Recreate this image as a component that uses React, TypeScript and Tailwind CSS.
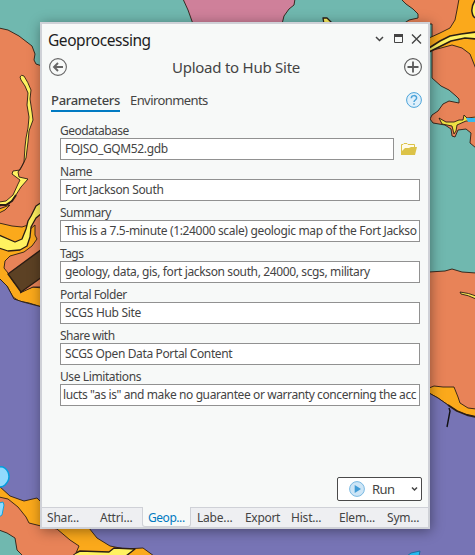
import React from "react";

const INK = "#2b1d14";

function MapBackground() {
  return (
    <svg className="absolute inset-0" width="475" height="555" viewBox="0 0 475 555" stroke={INK} strokeWidth="0.9" strokeLinejoin="round">
      <rect width="475" height="555" fill="#70b8af" stroke="none" />
      <path d="M183-1L188 10L193 24H282L284 16L289 9L294 5L295-1Z" fill="#cf809a" />
      <path d="M324 24L323 18L327 18L333 24Z" fill="#fff260" strokeWidth="1.3" />
      <path d="M401-1L406 4L413 9L418 14V18L409 20L403 24H432V78L441 86L449 90L456 96L459 99V103L449 101L443 104L438 111L432 115L430 119L433 123L445 125L451 129L452 136L455 137L458 130L466 129L471 133L470 143L476 148V-1Z" fill="#e88358" />
      <path d="M459-1L457 10L455 20L450 28L440 33L429 38V51L441 48L452 45L462 48L470 54L474 64L476 69V-1Z" fill="#fba91b" />
      <path d="M476-1Q471 6 472 12T476 18Z" fill="#fff260" strokeWidth="1.5" />
      <path d="M429 48L440 41L450 36L461 34L476 32V39L465 38L451 41L439 47L429 52Z" fill="#fff260" strokeWidth="1.6" />
      <path d="M439 118L446 122L454 122L459 120L463 120L464 115L467 118L476 117V121L466 121L457 125L456 131L454 134L452 126L442 124Z" fill="#eee044" />
      <path d="M466 118H476V122H468Z" fill="#38b8ee" stroke="none" />
      <path d="M429 272L445 271L452 269L462 272L476 273V428H429Z" fill="#e88358" />
      <path d="M460 292Q469 293 476 296V299Q468 295 461 294Z" fill="#f5e656" />
      <path d="M-1 28L8 30L19 36L32 46L35 54L34 60L36 64L42 66V300H-1Z" fill="#e88358" />
      <path d="M20 77Q21 74 24 76Q28 82 31 90L30 99L32 112L33 120L29 131L28 142L26 158L22 166L18 172L19 177L28 179L21 187L14 198L9 204L-1 206V202L6 201L13 195L18 184L20 180L12 174L13 171L20 170L24 162L25 147L26 138L28 128L29 117L27 105L28 93L25 86L21 80Z" fill="#fff260" />
      <path d="M-1 205H6L12 201L16 195" fill="none" strokeWidth="2" />
      <path d="M-1 209L10 205L5 210L-1 213Z" fill="#fba91b" />
      <path d="M-1 223L12 226L22 227L28 225V231L35 225L35 235L37 239L32 246L24 252L10 256L5 261L4 268L8 273L15 284L22 291L33 287L42 288V307L29 303L19 301L13 297L7 286L-1 278Z" fill="#fba91b" />
      <path d="M42 202L36 206L31 216L28 221L26 229L22 239L15 242L-1 235V248L8 251L20 250L27 246L30 237L31 227L36 218L42 213Z" fill="#fff260" strokeWidth="1.3" />
      <path d="M20 293L28 286L41 276V287L33 287Z" fill="#e88358" />
      <path d="M8 274L42 249V277L21 292Z" fill="#5c4124" strokeWidth="1.4" />
      <path d="M-1 278L7 286L14 299L23 302L42 307V405H429V408L439 413L449 420L458 423L468 427H476V556H-1Z" fill="#7774b5" stroke="none" />
      <path d="M-1 278L7 286L14 299L23 302L42 307" fill="none" />
      <path d="M429 388L434 386L443 387L454 387L458 397L460 403L468 408L476 409V417L467 415L457 411L448 405L438 398L429 393Z" fill="#fba91b" />
      <path d="M429 393L438 398L448 405L457 411L467 415L476 417V430H429Z" fill="#7774b5" stroke="none" />
      <path d="M448 405L457 411L467 415L476 417" fill="none" strokeWidth="1.8" />
      <path d="M429 393L438 398L448 405" fill="none" />
      <path d="M449 408L450 411L447 427" fill="none" stroke="#111" strokeWidth="1.4" />
      <path d="M-1 486L10 496L24 501L37 498L42 503L89 528L97 538L110 546L125 549L143 548L154 556H-1Z" fill="#fba91b" />
      <path d="M114 548L135 549L126 556H70L80 551L109 552Z" fill="#fff260" strokeWidth="1.4" />
      <path d="M-1 497L8 499L18 507L26 517L29 523L41 526L57 529L70 540L79 546L76 553L72 556H-1Z" fill="#e88358" />
      <path d="M-1 530L7 533L15 538L17 550L23 556H-1Z" fill="#70b8af" />
      <path d="M-1 467Q5 466 8 472Q11 479 5 485Q3 487-1 487Z" fill="#91dafd" stroke="#009fdf" strokeWidth="1.5" />
      <path d="M-1 503L3 502L4 505L2 515L-1 517Z" fill="#91dafd" stroke="#009fdf" />
      <path d="M407 556L411 553L420 551L419 556Z" fill="#25b7ed" stroke="#176b9b" />
    </svg>
  );
}

interface Field {
  label: string;
  value: string;
  labelClass: string;
  valueClass: string;
  browse?: boolean;
}

const fields: Field[] = [
  { label: "Geodatabase", value: "FOJSO_GQM52.gdb", labelClass: "tracking-[-0.54px]", valueClass: "tracking-[-0.37px]", browse: true },
  { label: "Name", value: "Fort Jackson South", labelClass: "tracking-[-0.45px]", valueClass: "tracking-[-0.34px]" },
  { label: "Summary", value: "This is a 7.5-minute (1:24000 scale) geologic map of the Fort Jackso", labelClass: "tracking-[-0.48px]", valueClass: "tracking-[-0.34px]" },
  { label: "Tags", value: "geology, data, gis, fort jackson south, 24000, scgs, military", labelClass: "tracking-[-0.55px]", valueClass: "tracking-[-0.37px]" },
  { label: "Portal Folder", value: "SCGS Hub Site", labelClass: "tracking-[-0.43px]", valueClass: "tracking-[-0.3px]" },
  { label: "Share with", value: "SCGS Open Data Portal Content", labelClass: "tracking-[-0.5px]", valueClass: "tracking-[-0.37px]" },
  { label: "Use Limitations", value: 'lucts "as is" and make no guarantee or warranty concerning the acc', labelClass: "tracking-[-0.4px]", valueClass: "-ml-[2px] tracking-[-0.4px]" },
];

const dockTabs = [
  { name: "Shar...", cls: "w-[53px] pl-[5px]" },
  { name: "Attri...", cls: "w-[47px] pl-[5px]" },
  { name: "Geop...", cls: "w-[49px] pl-[5px] tracking-[-0.45px]", active: true },
  { name: "Labe...", cls: "w-[48px] pl-[6px]" },
  { name: "Export", cls: "w-[46px] pl-[6px] tracking-[-0.3px]" },
  { name: "Hist...", cls: "w-[48px] pl-[6px]" },
  { name: "Elem...", cls: "w-[48px] pl-[6px]" },
  { name: "Sym...", cls: "w-[47px] pl-[6px]" },
];

function FolderIcon() {
  return (
    <svg width="16" height="12" viewBox="0 0 16 12" className="mb-px ml-[7px] shrink-0">
      <path d="M.5 11V1.5H2L3 .5H6L7 1.5H13.5V4" fill="#fffbe8" stroke="#dcc348" />
      <path d="M0 12V9L4 5H8L10 4H16L14 12Z" fill="#dcc348" />
    </svg>
  );
}

export default function App() {
  return (
    <div className="relative flex h-[555px] w-[475px] overflow-hidden pt-[22px] pl-[40px] font-['Noto_Sans',sans-serif] text-[#444]">
      <MapBackground />
      <main className="relative flex h-[507px] w-[390px] flex-col border-2 border-[#cfd1d7] bg-[#f7f9f8] shadow-[1px_2px_12px_rgba(0,0,0,0.4)]">
        <header className="flex h-8 items-center pr-[6px] pl-[6px]">
          <h1 className="flex-1 text-[15.5px] leading-8 tracking-[-0.45px] text-[#1e1e1e]">Geoprocessing</h1>
          <svg width="47" height="12" viewBox="0 0 47 12" fill="none" stroke="#444" className="mb-0.5">
            <path d="M1 4L4.5 7.5L8 4" strokeWidth="1.5" />
            <path d="M19.5 1.5H27.5V9.5H19.5Z" />
            <path d="M19 2.5H28" strokeWidth="3" />
            <path d="M37 1.5L46 10.5M46 1.5L37 10.5" strokeWidth="1.4" />
          </svg>
        </header>
        <div className="flex h-[22px] items-center pr-[6px] pl-[7px]">
          <svg width="18" height="18" viewBox="0 0 18 18" fill="none" stroke="#666">
            <circle cx="9" cy="9" r="8.4" strokeWidth="1.1" />
            <path d="M14 9H5M9 5L5 9L9 13" strokeWidth="1.9" />
          </svg>
          <h2 className="flex-1 pl-px text-center text-[15px] leading-5 tracking-[-0.25px]">Upload to Hub Site</h2>
          <svg width="18" height="18" viewBox="0 0 18 18" fill="none" stroke="#5a5a5a">
            <circle cx="9" cy="9" r="8.4" strokeWidth="1.1" />
            <path d="M3.5 9H14.5M9 3.5V14.5" strokeWidth="1.8" />
          </svg>
        </div>
        <nav className="mt-[12px] flex h-[22px] items-start pr-[6px] pl-[9px] text-[13px] leading-[20px]">
          <span className="h-[22px] w-[69px] border-b-2 border-[#007ac2] font-medium whitespace-nowrap tracking-[-0.3px]">Parameters</span>
          <span className="ml-[10px] flex-1 tracking-[-0.58px]">Environments</span>
          <svg width="16" height="16" viewBox="0 0 16 16" className="mt-[2px]" fill="none" stroke="#4ba3d9">
            <circle cx="8" cy="8" r="7.4" fill="#e0f0fb" />
            <path d="M5.3 6.2C5.3 2.8 10.6 2.8 10.6 6C10.6 8 8 8 8 10M8 11.2V12.8" strokeWidth="1.5" />
          </svg>
        </nav>
        <section className="mt-[10px] flex flex-col gap-[3px] pr-2 pl-[18px] text-[12px]">
          {fields.map((f) => (
            <label key={f.label} className="block">
              <span className={`block h-4 leading-[18px] whitespace-nowrap ${f.labelClass}`}>{f.label}</span>
              <span className="flex items-center">
                <span className={`flex h-[22px] items-center overflow-hidden border border-[#919191] bg-white pl-1 ${f.browse ? "w-[334px]" : "w-[360px]"}`}>
                  <span className={`leading-5 whitespace-pre ${f.valueClass}`}>{f.value}</span>
                </span>
                {f.browse && <FolderIcon />}
              </span>
            </label>
          ))}
        </section>
        <div className="mt-auto flex justify-end pr-[6px] pb-[6px]">
          <button className="flex h-6 w-[85px] items-center rounded-[2px] border border-[#4a4a4a] bg-white pl-[11px] text-[13px]">
            <svg width="16" height="16" viewBox="0 0 16 16">
              <circle cx="8" cy="8" r="7.4" fill="#cde5f6" stroke="#7ab9e2" />
              <path d="M5.7 4V12L12 8Z" fill="#3f9bd6" />
            </svg>
            <span className="ml-[7px] flex-1 text-left leading-5 tracking-[-0.6px]">Run</span>
            <svg width="7" height="6" viewBox="0 0 7 6" className="mr-[3px]" fill="none" stroke="#444" strokeWidth="1.5">
              <path d="M1 1.5L3.5 4L6 1.5" />
            </svg>
          </button>
        </div>
        <footer className="flex h-5 bg-[#eeeff2] text-[12px] leading-[19px] tracking-[-0.2px]">
          {dockTabs.map((t) => (
            <span
              key={t.name}
              className={`h-5 shrink-0 whitespace-nowrap ${t.cls} ${t.active ? "rounded-b-[3px] border-x border-b border-[#cfd1d7] bg-[#f7f9f8] pt-px text-[#0079c1]" : "border-t border-[#cfd1d7]"}`}
            >
              {t.name}
            </span>
          ))}
        </footer>
      </main>
    </div>
  );
}
